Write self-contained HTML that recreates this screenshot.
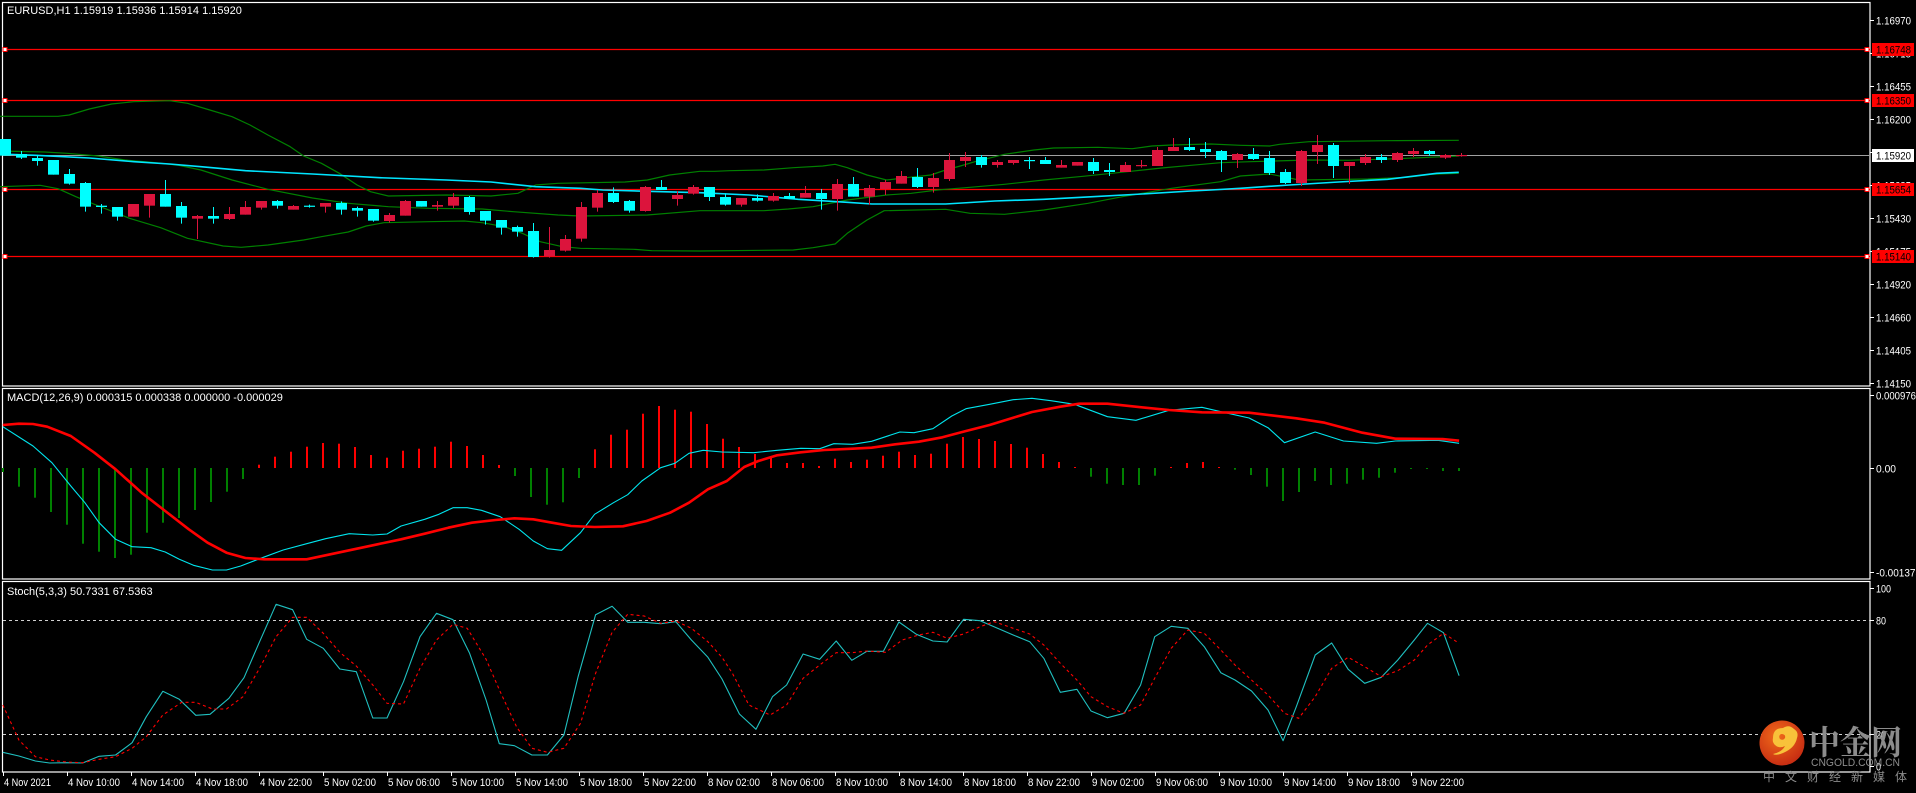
<!DOCTYPE html>
<html><head><meta charset="utf-8">
<style>
html,body{margin:0;padding:0;background:#000;width:1916px;height:793px;overflow:hidden}
svg{display:block}
text{font-family:"Liberation Sans",sans-serif}
</style></head>
<body>
<svg id="c" width="1916" height="793" xmlns="http://www.w3.org/2000/svg">
<rect width="1916" height="793" fill="#000"/>
<g fill="none" stroke="#fff" stroke-width="1.2">
<rect x="2.5" y="2.5" width="1867.5" height="383.5"/>
<rect x="2.5" y="388.5" width="1867.5" height="190.5"/>
<rect x="2.5" y="581.5" width="1867.5" height="190.5"/>
</g>
<g id="g"></g>
<g font-size="11" fill="#fff">
<text x="7" y="14">EURUSD,H1  1.15919 1.15936 1.15914 1.15920</text>
<text x="7" y="401">MACD(12,26,9) 0.000315 0.000338 0.000000 -0.000029</text>
<text x="7" y="595">Stoch(5,3,3) 50.7331 67.5363</text>
</g>
<g id="ax" font-size="11" fill="#fff"></g>
<defs><radialGradient id="lg" cx="0.4" cy="0.35" r="0.7"><stop offset="0" stop-color="#f06a1a"/><stop offset="1" stop-color="#c52a12"/></radialGradient></defs>
<circle cx="1782" cy="743" r="22.5" fill="url(#lg)"/>
<path d="M1773 738 q0-10 10-10 q6-4 11 1 q5 3 3 9 q-2 10-14 15 q-7 3-10 1 q9-2 12-8 q-6 3-10-1 q-3-3-2-7z M1781 734 q-3 2-1 5 q3 2 5-1 q1-4-4-4z" fill="#f8c23a"/>
<text x="1809" y="754" font-size="33" font-weight="bold" fill="#8c8c8c" textLength="93" lengthAdjust="spacingAndGlyphs" style="font-family:'Liberation Serif','Noto Serif CJK SC',serif">中金网</text>
<text x="1811" y="766" font-size="11" fill="#8c8c8c" textLength="89" lengthAdjust="spacingAndGlyphs">CNGOLD.COM.CN</text>
<text x="1763" y="781" font-size="12" fill="#8c8c8c" letter-spacing="10" style="font-family:'Liberation Sans','Noto Sans CJK SC',sans-serif">中文财经新媒体</text>
</svg>
<script>
var NS="http://www.w3.org/2000/svg",g=document.getElementById("g"),ax=document.getElementById("ax");
function el(t,a,p){var e=document.createElementNS(NS,t);for(var k in a)e.setAttribute(k,a[k]);(p||g).appendChild(e);return e;}
function pl(pts,st,w,dash){el("polyline",{points:pts.map(function(p){return p[0].toFixed(1)+","+p[1].toFixed(1)}).join(" "),fill:"none",stroke:st,"stroke-width":w,"stroke-dasharray":dash||"none","stroke-linejoin":"round"});}
function cv(a,ox,sx,oy,sy){var r=[];for(var i=0;i<a.length;i+=2)r.push([ox+a[i]/sx,oy+a[i+1]/sy]);return r;}
function join(a,b,cut){return a.filter(function(p){return p[0]<=cut;}).concat(b.filter(function(p){return p[0]>cut;}));}
[[49,"#ff0000"],[100,"#ff0000"],[189,"#ff0000"],[256,"#ff0000"]].forEach(function(l){el("line",{x1:3,x2:1870,y1:l[0]+.5,y2:l[0]+.5,stroke:l[1],"stroke-width":1.3});el("rect",{x:3,y:l[0]-1.5,width:4,height:4,fill:"#fff",stroke:"#f00","stroke-width":1});el("rect",{x:1865,y:l[0]-1.5,width:4,height:4,fill:"#fff",stroke:"#f00","stroke-width":1});});
el("line",{x1:3,x2:1870,y1:155.5,y2:155.5,stroke:"#a0a0a0","stroke-width":1});
var B1=[
[0,349,130,349,155,345,200,327,250,312,300,305,380,302,420,310,470,330,520,350,560,375,600,405,650,440,680,468,720,490,760,520,800,555,830,575,870,588,1000,585,1100,588,1160,580,1200,555,1250,550,1400,546,1450,540,1500,525,1568,514],
[0,453,100,456,150,460,220,468,280,480,340,487,400,496,450,510,520,540,600,568,700,594,780,610,870,620,960,625,1080,627,1150,635,1250,645,1300,648,1450,645,1568,632],
[0,560,90,556,130,566,170,590,210,612,290,655,360,683,420,715,500,738,540,742,600,735,680,720,720,710,780,696,820,678,860,668,960,665,1040,663,1080,668,1130,680,1170,700,1210,725,1260,740,1300,745,1420,748,1460,752,1568,753]];
var B2=[
[0,512,30,514,60,512,130,510,190,503,250,498,275,493,300,503,340,525,380,540,420,533,470,525,500,510,530,498,560,485,620,463,680,450,720,444,810,442,880,446,920,438,960,435,1040,432,1100,436,1160,438,1180,433,1240,425,1400,422,1545,421],
[0,631,60,632,130,632,180,627,230,620,300,600,380,585,430,580,490,569,550,562,620,553,700,540,780,529,870,515,940,504,1000,496,1060,488,1120,485,1240,480,1320,481,1420,476,1545,468],
[0,750,190,750,230,743,275,732,300,700,340,660,375,632,500,628,550,640,620,643,700,630,790,610,860,590,920,575,960,565,1060,545,1100,528,1160,522,1220,540,1360,537,1440,532,1490,523,1545,520]];
for(var i=0;i<3;i++)pl(join(cv(B1[i],0,2.24,0,3),cv(B2[i],700,2.036,0,3),700),"#008000",1.2);
var M1=[0,462,80,466,200,474,300,485,380,492,450,500,550,512,700,522,850,533,1000,540,1100,546,1200,560,1300,565,1350,570,1450,574,1568,578];
var M2=[0,578,100,585,200,598,300,607,350,612,500,612,600,603,700,598,800,590,900,582,1000,573,1040,570,1100,565,1200,555,1300,546,1400,538,1500,520,1545,517];
pl(join(cv(M1,0,2.24,0,3),cv(M2,700,2.036,0,3),700),"#00e5ff",1.6);
var C=[
["c",417,467,417,467],["c",462,473,453,477],["c",474,483,466,497],["c",480,524,480,524],["c",522,551,507,554],["c",549,620,546,635],["c",617,621,612,641],["c",621,650,621,662],["r",612,650,612,650],["r",582,617,582,653],["c",582,620,540,620],["c",618,653,606,671],["r",648,656,645,717],["c",648,656,621,671],["r",642,657,621,660],["r",621,644,603,644],["r",603,623,603,629],["c",603,617,600,626],["r",618,629,615,629],["c",617,620,614,623],["r",609,620,609,638],["c",609,629,604,644],["c",624,632,620,650],["c",627,662,627,665],["r",645,663,639,668],["r",603,647,600,647],["c",603,620,603,620],["r",615,620,603,632],["r",591,617,579,624],["c",591,636,588,644],["c",633,662,633,674],["c",660,683,660,704],["c",681,695,677,710],["c",693,771,669,773],["r",750,769,681,773],["r",717,752,705,755],["r",621,716,606,725],["r",579,623,570,635],["c",579,606,562,609],["c",603,632,600,638],["r",561,633,558,635],["c",561,570,540,570],["r",585,597,573,617],["r",561,581,555,584],
["c",561,591,561,603],["c",591,614,580,617],["r",594,614,594,620],["c",594,602,583,605],["r",588,602,579,605],["c",588,596,579,596],["r",579,593,558,593],["c",579,597,567,629],["r",552,597,537,632],["c",552,590,531,590],["r",564,590,555,614],["r",546,567,540,585],["r",528,551,513,551],["c",531,561,504,564],["r",534,561,519,578],["r",480,537,459,543],["r",471,483,456,501],["c",471,495,465,503],["r",486,495,480,503],["r",480,489,480,494],["c",480,483,471,507],["c",480,492,471,492],["r",495,503,480,503],["r",486,497,486,497],["c",486,513,474,522],["c",510,516,489,528],["r",495,516,486,516],["r",495,498,480,503],["r",450,498,441,498],["r",441,453,414,453],["c",441,450,414,453],["c",447,456,426,474],["c",453,480,450,516],["r",462,480,459,504],["c",462,477,444,480],["c",474,519,453,525],["c",516,549,507,552],["r",453,549,450,558],["r",435,456,405,492],["c",435,498,429,534],["r",486,498,486,552],["r",471,489,462,495],["c",471,480,462,489],["r",459,480,456,486],["r",453,462,444,471],["c",453,462,450,468],["r",465,473,462,477],["r",465,468,459,470]];
C.forEach(function(d,i){var x=5+16*i,col=d[0]=="c"?"#00ffff":"#dc143c";
el("line",{x1:x+.5,x2:x+.5,y1:d[3]/3,y2:d[4]/3,stroke:col,"stroke-width":1});
var t=d[1]/3,b=d[2]/3;if(b-t<1.2)b=t+1.2;el("rect",{x:x-5,y:t,width:11,height:b-t,fill:col});});
var H=[4,18.7,29.7,44,56.7,75.7,83.7,90,86.7,64.7,54.7,50,42,34,23.7,11,-3.3,-11.3,-16.3,-21.3,-25,-24.3,-21,-13,-10.3,-17.3,-19.3,-21.3,-26.3,-22,-13,-3,8,29,36.7,34.3,10,-18.7,-33.3,-38.3,-54.3,-62,-58.3,-56.3,-44,-29.3,
-21,-14,-10.7,-5,-5,-2,-9.3,-6,-8.3,-12.3,-16.3,-13,-14.3,-24.3,-31,-29,-27,-24,-20.3,-14,-6,-1,8.7,15.7,17,17,7.7,-1,-5,-6,-1,1.7,7,18.7,33,24,13,17,15.7,11.7,9.7,4.7,1,1,3,3];
H.forEach(function(v,i){var x=3+16*i;el("rect",{x:x-1,y:Math.min(468,468+v),width:2,height:Math.max(1,Math.abs(v)),fill:v>0?"#008000":"#ff0000"});});
var MC1=[6,122,70,180,110,230,150,300,180,350,210,410,245,460,280,482,320,485,350,498,380,520,410,538,450,552,480,552,510,540,550,518,600,492,650,473,690,458,740,443,790,447,820,444,850,420,900,400,930,385,960,365,990,365,1020,373,1060,392,1100,430,1130,465,1160,488,1190,493,1230,440,1260,385,1300,350,1330,326,1360,285,1400,245,1430,232,1460,202,1490,193,1530,198,1568,196];
var MC2=[0,197,50,200,100,193,150,187,190,188,220,173,260,175,300,166,360,138,390,140,430,128,470,90,500,68,550,55,600,41,640,37,680,44,730,55,800,92,860,103,930,73,1000,64,1040,77,1100,96,1140,125,1175,170,1240,138,1300,165,1370,172,1410,165,1500,163,1545,172];
var MS1=[6,117,40,113,70,114,100,122,150,150,200,200,245,250,300,320,350,375,400,430,440,470,480,500,520,516,560,520,650,520,700,505,750,490,800,475,850,460,900,443,950,425,1000,410,1050,402,1090,397,1130,400,1170,410,1210,420,1260,423,1320,421,1370,405,1420,380,1460,350,1500,310,1540,285,1568,270];
var MS2=[0,258,30,243,60,225,100,208,150,199,200,192,260,188,300,185,350,175,400,167,450,154,500,135,550,117,600,95,640,78,700,62,740,53,800,53,880,65,930,72,1000,79,1100,80,1200,97,1260,110,1340,140,1410,158,1510,159,1545,164];
pl(join(cv(MC1,0,2.119,386,3),cv(MC2,730,2.119,386,3),730),"#00e5ee",1.1);
pl(join(cv(MS1,0,2.119,386,3),cv(MS2,730,2.119,386,3),730),"#ff0000",2.6);
[620,734].forEach(function(y){el("line",{x1:3,x2:1870,y1:y+.5,y2:y+.5,stroke:"#d0d0d0","stroke-width":1,"stroke-dasharray":"3,3"});});
var S1=[6,517,40,528,75,543,105,549,140,548,175,549,210,529,245,525,280,488,310,410,345,334,380,358,415,406,445,403,485,355,517,293,550,185,585,73,620,89,650,178,685,205,720,267,755,275,790,414,820,414,855,305,890,170,925,100,960,119,995,220,1030,360,1058,491,1090,497,1127,525,1160,525,1195,465,1225,290,1262,104,1297,79,1330,127,1365,127,1400,131,1432,125,1465,180,1500,232,1530,297,1568,405];
var S2=[0,348,20,402,55,448,90,350,120,315,155,222,190,238,225,183,258,241,290,214,325,214,358,126,395,163,430,183,460,186,495,118,530,122,600,165,635,185,665,235,700,337,735,328,765,393,800,413,835,400,870,315,900,170,935,139,970,145,1005,200,1040,278,1070,300,1105,333,1140,390,1172,482,1200,380,1240,225,1275,189,1310,268,1345,310,1380,292,1415,240,1450,180,1478,130,1512,158,1545,287];
var R1=[6,375,40,480,75,530,105,540,140,546,175,548,210,538,245,530,280,505,310,470,345,405,385,367,415,367,450,387,480,387,515,350,550,265,585,170,620,112,650,112,685,160,720,217,755,258,790,315,820,370,855,372,890,265,925,180,960,133,990,145,1030,238,1060,335,1095,442,1127,505,1160,517,1195,505,1230,430,1262,280,1297,157,1330,103,1365,108,1400,130,1432,123,1465,145,1500,185,1530,232,1568,310];
var R2=[5,280,40,375,85,405,120,375,155,295,190,255,225,218,258,218,290,213,330,217,365,180,400,165,430,157,460,175,495,162,530,140,560,125,600,145,635,162,665,195,700,250,735,300,765,350,800,380,835,400,870,375,900,295,935,205,970,150,1005,160,1040,210,1070,255,1105,300,1140,345,1175,400,1205,415,1240,350,1275,265,1310,232,1345,260,1380,290,1415,272,1450,240,1478,195,1512,160,1545,190];
pl(join(cv(S1,0,2.119,580,3),cv(S2,730,2.119,580,3),730),"#20c0c0",1.1);
pl(join(cv(R1,0,2.119,580,3),cv(R2,730,2.119,580,3),730),"#ff0000",1.1,"3,3");
function txt(x,y,t,fill){var a={x:x,y:y,textLength:(t.length*5).toFixed(0),lengthAdjust:"spacingAndGlyphs"};if(fill)a.fill=fill;var e=el("text",a,ax);e.textContent=t;return e;}
function lab(y,t){el("line",{x1:1870,x2:1874,y1:y+.5,y2:y+.5,stroke:"#fff","stroke-width":1},ax);txt(1876,y+4.5,t);}
[[20,"1.16970"],[53,"1.16715"],[86,"1.16455"],[119,"1.16200"],[152,"1.15940"],[185,"1.15685"],[218,"1.15430"],[251,"1.15175"],[284,"1.14920"],[317,"1.14660"],[350,"1.14405"],[383,"1.14150"],[395,"0.000976"],[468,"0.00"],[572,"-0.001378"],[588,"100"],[620,"80"],[734,"20"],[766,"0"]].forEach(function(a){lab(a[0],a[1]);});
[[49,"1.16748","#ff0000"],[100,"1.16350","#ff0000"],[155,"1.15920","#ffffff"],[189,"1.15654","#ff0000"],[256,"1.15140","#ff0000"]].forEach(function(a){el("rect",{x:1872,y:a[0]-6,width:42,height:13,fill:a[2]},ax);txt(1876,a[0]+4.5,a[1],"#000");});
var T=["4 Nov 2021","4 Nov 10:00","4 Nov 14:00","4 Nov 18:00","4 Nov 22:00","5 Nov 02:00","5 Nov 06:00","5 Nov 10:00","5 Nov 14:00","5 Nov 18:00","5 Nov 22:00","8 Nov 02:00","8 Nov 06:00","8 Nov 10:00","8 Nov 14:00","8 Nov 18:00","8 Nov 22:00","9 Nov 02:00","9 Nov 06:00","9 Nov 10:00","9 Nov 14:00","9 Nov 18:00","9 Nov 22:00"];
T.forEach(function(t,i){var x=3+64*i;el("line",{x1:x+.5,x2:x+.5,y1:772,y2:776,stroke:"#fff","stroke-width":1},ax);el("text",{x:x+1,y:786,textLength:(t.length*4.7).toFixed(0),lengthAdjust:"spacingAndGlyphs"},ax).textContent=t;});
</script>
</body></html>
